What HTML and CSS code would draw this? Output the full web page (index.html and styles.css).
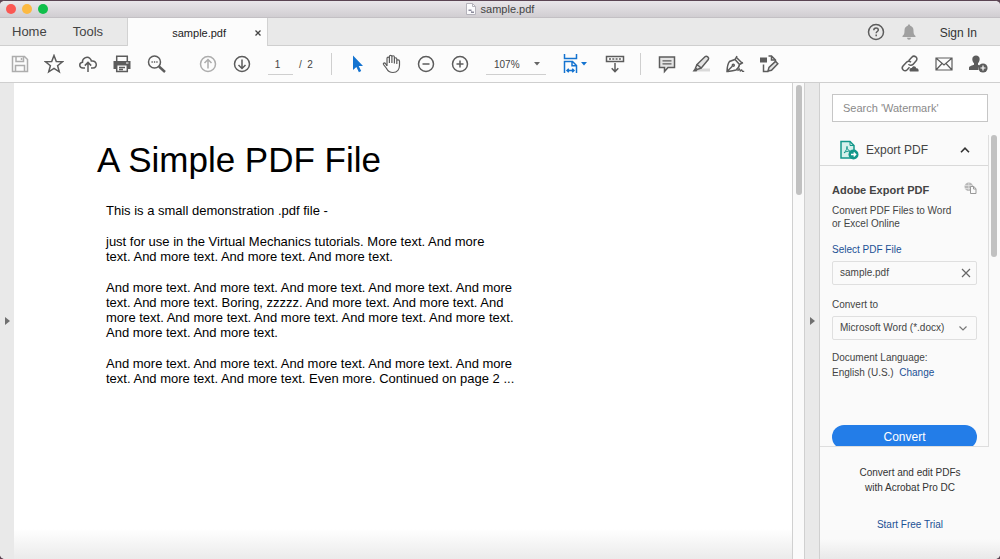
FILE: index.html
```html
<!DOCTYPE html>
<html lang="en">
<head>
<meta charset="utf-8">
<title>sample.pdf</title>
<link rel="stylesheet" href="styles.css">
</head>
<body>
<div class="window">
  <header class="titlebar">
    <div class="lights"><span class="light red"></span><span class="light amber"></span><span class="light green"></span></div>
    <div class="doc-title">
      <svg class="doc-icon" viewBox="0 0 10 12"><path d="M.5.5h6l3 3v8h-9z" fill="#fafafc" stroke="#b5b3bb"/><path d="M6.500.5v3h3" fill="none" stroke="#b5b3bb"/><path d="M2.500 6.500h3v2h2.500v1.500h-3v-2h-2.500z" fill="#8c8b9c"/></svg>
      <span>sample.pdf</span>
    </div>
  </header>

  <nav class="tabs">
    <button class="nav-link">Home</button>
    <button class="nav-link">Tools</button>
    <div class="tab">
      <span class="tab-name">sample.pdf</span>
      <button class="tab-close" aria-label="Close tab"><svg viewBox="0 0 8 8"><path d="M1.500 1.500l5 5M6.500 1.500l-5 5" stroke="#444" stroke-width="1.300"/></svg></button>
    </div>
    <div class="account">
      <button class="icon-btn" aria-label="Help"><svg class="icon" viewBox="0 0 20 20"><circle cx="10" cy="10" r="7.500"/><path d="M7.800 8.200c0-3 4.500-2.900 4.500-.3 0 1.600-2.100 1.600-2.100 3.300M10.200 12.600v1.600"/></svg></button>
      <button class="icon-btn" aria-label="Notifications"><svg class="icon" viewBox="0 0 20 20"><path class="bell" d="M10 2.500c.8 0 1.200.5 1.200 1.200 2.300.6 3.300 2.400 3.300 4.800 0 3.200.4 4.300 2 5.500v1h-13v-1c1.600-1.200 2-2.300 2-5.500 0-2.400 1-4.200 3.300-4.800 0-.7.4-1.200 1.200-1.200zM8 15.800h4c-.2 1.300-.9 1.900-2 1.900s-1.800-.6-2-1.900z"/></svg></button>
      <button class="sign-in">Sign In</button>
    </div>
  </nav>

  <div class="toolbar">
    <div class="group">
      <button class="icon-btn" aria-label="Save"><svg class="icon pale" viewBox="0 0 20 20"><path d="M2.500 2.500h12l3 3v12h-15zM6 2.500v5h7.500v-5M5.500 17.500v-6h9v6M11.500 4v2"/></svg></button>
      <button class="icon-btn" aria-label="Star"><svg class="icon" viewBox="0 0 20 20"><path d="M10 1.500l2.300 6 6.200.3-4.900 3.900 1.700 6.100L10 14.400l-5.300 3.400 1.700-6.100-4.900-3.900 6.200-.3z"/></svg></button>
      <button class="icon-btn" aria-label="Upload"><svg class="icon" viewBox="0 0 20 20"><path d="M7 14H5C.8 14 .7 8.600 4.500 8.200 4 4.500 9 1.600 12 4.500c.8.700 1.200 1.600 1.300 2.500 6-.8 6.600 7 1.700 7h-2M10 18V9M6.800 11.600L10 8.400l3.200 3.200"/></svg></button>
      <button class="icon-btn" aria-label="Print"><svg class="icon" viewBox="0 0 20 20"><path class="solid" d="M1.500 7h17v8h-3v-3.500h-11V15h-3z"/><path d="M4.700 7V2.200h10.600V7M4.700 11v6.500h10.600V11M7 13.500h6M7 15.500h4"/><path d="M14 9h2.500" stroke="#fff" stroke-width="1"/></svg></button>
      <button class="icon-btn" aria-label="Find"><svg class="icon" viewBox="0 0 20 20"><circle cx="8.500" cy="8" r="6"/><path d="M13 12.500l6 5.500" stroke-width="2.400"/><path d="M5.500 8h1.300M7.900 8h1.300M10.300 8h1.300"/></svg></button>
    </div>
    <div class="group pager">
      <button class="icon-btn" aria-label="Previous page"><svg class="icon pale" viewBox="0 0 20 20"><circle cx="10" cy="10" r="7.500"/><path d="M10 14.500v-9M6.500 9L10 5.500 13.500 9"/></svg></button>
      <button class="icon-btn" aria-label="Next page"><svg class="icon" viewBox="0 0 20 20"><circle cx="10" cy="10" r="7.500"/><path d="M10 5.500v9M6.500 11l3.500 3.500 3.500-3.500"/></svg></button>
    </div>
    <input class="page-no" type="text" value="1" aria-label="Page number">
    <span class="page-total">/&nbsp; 2</span>
    <span class="rule"></span>
    <div class="group">
      <button class="icon-btn" aria-label="Select"><svg class="icon" viewBox="0 0 20 20"><path d="M5 1.500v14.500l3.400-3 2.500 5.200 2.300-1.100-2.500-5h4.300z" fill="#1473d0" stroke="none"/></svg></button>
      <button class="icon-btn" aria-label="Hand"><svg class="icon thin" viewBox="0 0 20 20"><path d="M5 12V4.500c0-1.800 2.400-1.800 2.400 0V9M7.400 9V2.700c0-1.800 2.500-1.800 2.500 0V9M9.900 9V3c0-1.700 2.500-1.700 2.500 0v6.500M12.400 5c0-1.700 2.400-1.700 2.400 0v5M14.800 7c0-1.700 2.700-1.600 2.700.2v4c0 4-2.200 7.300-6.500 7.300-3.600 0-5.300-1.600-6.600-4.300L1.500 10.500c-.6-1.400 1-2 1.900-1L5 12"/></svg></button>
      <button class="icon-btn" aria-label="Zoom out"><svg class="icon" viewBox="0 0 20 20"><circle cx="10" cy="10" r="7.500"/><path d="M6.500 10h7"/></svg></button>
      <button class="icon-btn" aria-label="Zoom in"><svg class="icon" viewBox="0 0 20 20"><circle cx="10" cy="10" r="7.500"/><path d="M6.500 10h7M10 6.500v7"/></svg></button>
    </div>
    <div class="zoom-box">
      <select class="zoom-select" aria-label="Zoom level"><option>107%</option></select>
      <svg class="caret" viewBox="0 0 6 4"><path d="M0 0h6L3 3.500z" fill="#666"/></svg>
    </div>
    <button class="fit-btn" aria-label="Fit width">
      <svg class="icon blue" viewBox="0 0 20 20"><path d="M3.500 0v4.500h12V0M3.500 19V7.500h8l4 4V19M11 7.500v4.200h4.500M6 16.500h7M7.800 14.700L6 16.500l1.800 1.800M11.200 14.700l1.800 1.800-1.800 1.800"/></svg>
      <svg class="caret" viewBox="0 0 6 4"><path d="M0 0h6L3 3.500z" fill="#1473d0"/></svg>
    </button>
    <button class="icon-btn keys" aria-label="Page controls"><svg class="icon" viewBox="0 0 20 20"><path d="M1.500 2.500h17v5h-17zM10 9v8.500M6.700 14.300l3.300 3.300 3.300-3.300"/><path d="M4 5h13" stroke-dasharray="2 1.300"/></svg></button>
    <span class="rule"></span>
    <div class="group">
      <button class="icon-btn" aria-label="Comment"><svg class="icon" viewBox="0 0 20 20"><path d="M2.500 3h15v10.500H11l-3.500 4v-4h-5z" fill="#e4e4e4"/><path d="M5.500 6.800h9M5.500 9.800h9" stroke-width="1.200"/></svg></button>
      <button class="icon-btn" aria-label="Highlight"><svg class="icon" viewBox="0 0 20 20"><path d="M9 14.500h10v3H5z" fill="#d9d9d9" stroke="none"/><path d="M6 10.500l8-7.700c1.600-1.500 4.600.8 3.300 2.800l-7 8.400zM6 10.500l-1.500 3.500 1.800 1.500 4-1.500" fill="#e4e4e4"/><path class="solid" d="M4 14l2.500 2-1 1.500H1.500z"/></svg></button>
      <button class="icon-btn" aria-label="Sign"><svg class="icon" viewBox="0 0 20 20"><path d="M2 17.500C2.200 13 2.800 9.500 4.500 7.500L10 5.500l4.500 5c-.5 2.500-1.500 4.500-3.500 5.500-3 1-6 1.200-9 1.500zM2 17.500l5.300-5.300M10 5.500l2-3.500M14.500 10.500l3.500-2M11.500 3.500l5.500 5.500" /><circle cx="8.300" cy="11.200" r="1"/><path d="M12.500 16.800l2-1.800.8 2 1.400-1 .8 1.300h1.700" stroke-width="1.300"/></svg></button>
      <button class="icon-btn" aria-label="Edit"><svg class="icon" viewBox="0 0 20 20"><path d="M4.500 10.500v7h5M9.500 2h3l4 4v1.500M12.500 2v4h4"/><path class="solid" d="M1 3.500h7v5H1z"/><path d="M9 17l1-3.600 6.500-6 2.300 2.400-6.300 6.400z" fill="#e4e4e4"/></svg></button>
    </div>
    <div class="group share">
      <button class="icon-btn" aria-label="Share link"><svg class="icon" viewBox="0 0 20 20"><path d="M8.600 6.700l3.200-3.500c2.600-2.700 6.800.8 4.400 3.600L13 10.400c-1.500 1.500-3.500 1-4.500-.3M11 8.200c-1.500-1.500-3.300-1.200-4.500 0L3 12c-2.400 2.900 1.600 6.400 4.200 3.800l2.300-2.500"/><path class="solid" d="M10 17.500c-1.500-2.500.8-4 1.800-3.500 1-2.700 4.200-2 4.400.3 2.300-.2 2.800 2 2.300 3.200z"/></svg></button>
      <button class="icon-btn" aria-label="Email"><svg class="icon" viewBox="0 0 20 20"><path d="M2 4h16v12H2zM2.500 4.500L10 11l7.500-6.500M2.500 15.500L8 9.500M17.500 15.500L12 9.500" stroke-width="1.200"/></svg></button>
      <button class="icon-btn" aria-label="Add person"><svg class="icon" viewBox="0 0 20 20"><path class="solid" d="M8 1.500c4.500 0 4.500 5.500 2 7.800v1.500l2 1c-1.500 1-2 2.700-1.500 4.200H1v-2.500c.3-1.500 3.500-1.900 5-2.700V9.300C3.500 7 3.500 1.500 8 1.500z"/><circle cx="15" cy="14" r="4.600" fill="#5c5c5c" stroke="none"/><path d="M12.500 14h5M15 11.500v5" stroke="#fff" stroke-width="1.200"/></svg></button>
    </div>
  </div>

  <div class="workspace">
    <button class="gutter left" aria-label="Show navigation pane"><svg viewBox="0 0 5 8"><path d="M0 0l5 4-5 4z" fill="#707070"/></svg></button>
    <main class="page">
      <h1>A Simple PDF File</h1>
      <div class="copy">
        <p>This is a small demonstration .pdf file -</p>
        <p>just for use in the Virtual Mechanics tutorials. More text. And more<br>text. And more text. And more text. And more text.</p>
        <p>And more text. And more text. And more text. And more text. And more<br>text. And more text. Boring, zzzzz. And more text. And more text. And<br>more text. And more text. And more text. And more text. And more text.<br>And more text. And more text.</p>
        <p>And more text. And more text. And more text. And more text. And more<br>text. And more text. And more text. Even more. Continued on page 2 ...</p>
      </div>
    </main>
    <div class="scroll"><span class="thumb"></span></div>
    <button class="gutter right" aria-label="Hide tools pane"><svg viewBox="0 0 5 8"><path d="M0 0l5 4-5 4z" fill="#707070"/></svg></button>
    <aside class="side">
      <input class="search" type="text" placeholder="Search 'Watermark'" aria-label="Search tools">
      <div class="side-body">
        <section class="panel">
          <button class="panel-head">
            <svg class="export-icon" viewBox="0 0 20 20"><path d="M2 1.500h9l4 4V18H2z" fill="#d5f1ec" stroke="#12978a" stroke-width="1.500"/><path d="M11 1.500v4h4" fill="none" stroke="#12978a"/><path d="M5 13c2-2 3.500-5 3-7M7.800 7c.5 2.500 2 4 4.200 4.500M5 13c1.500-1.500 4-2 6.500-1.800" fill="none" stroke="#12978a"/><circle cx="14.500" cy="14.500" r="5" fill="#12978a"/><path d="M12 14.500h4.500M14.700 12.500l2 2-2 2" fill="none" stroke="#fff" stroke-width="1.300"/></svg>
            <span>Export PDF</span>
            <svg class="chevron" viewBox="0 0 10 6"><path d="M1 5.200l4-4 4 4" fill="none" stroke="#333" stroke-width="1.600"/></svg>
          </button>
          <div class="panel-body">
            <div class="panel-title"><h2>Adobe Export PDF</h2>
              <svg class="copy-icon" viewBox="0 0 13 12"><circle cx="4.800" cy="4.800" r="4.300" fill="#b8b8b8"/><path d="M1 3.500h7M1 6.500h6M4.800.5v8" stroke="#e8e8e8" stroke-width=".7"/><path d="M6.500 4.500h3.300l2.200 2.200v4.800H6.500z" fill="#fafafa" stroke="#999"/><path d="M9.500 4.500v2.500H12" fill="none" stroke="#999"/></svg></div>
            <p class="blurb">Convert PDF Files to Word<br>or Excel Online</p>
            <a class="select-file" href="#">Select PDF File</a>
            <div class="file-box"><span>sample.pdf</span><button aria-label="Remove file"><svg viewBox="0 0 10 10"><path d="M1 1l8 8M9 1L1 9" stroke="#666" stroke-width="1.200"/></svg></button></div>
            <label class="to-label" for="format">Convert to</label>
            <div class="format-box">
              <select id="format"><option>Microsoft Word (*.docx)</option></select>
              <svg class="down" viewBox="0 0 8 5"><path d="M.5.5L4 4 7.500.5" fill="none" stroke="#777" stroke-width="1.200"/></svg>
            </div>
            <p class="lang">Document Language:<br>English (U.S.)&nbsp; <a href="#">Change</a></p>
            <button class="convert">Convert</button>
          </div>
        </section>
        <div class="side-scroll"><span class="thumb"></span></div>
      </div>
      <footer class="promo">
        <p>Convert and edit PDFs<br>with Acrobat Pro DC</p>
        <a href="#">Start Free Trial</a>
      </footer>
    </aside>
  </div>
</div>
</body>
</html>
```
FILE: styles.css
```css
* { box-sizing: border-box; }
html, body { height: 100%; margin: 0; }
body { background: #5b4453; font-family: "Liberation Sans", Arial, sans-serif; color: #444; }
button, input, select { font: inherit; color: inherit; background: none; border: 0; padding: 0; margin: 0; border-radius: 0; }
button, select { appearance: none; cursor: pointer; }
h1, h2, p { margin: 0; font-weight: normal; }
a { color: #1a5195; text-decoration: none; }
svg { display: block; flex: none; }

.window { height: 100%; display: flex; flex-direction: column; border-top: 1px solid #5b4453; border-radius: 5px; overflow: hidden; background: #fafafa; }

.titlebar { flex: none; height: 17px; display: grid; grid-template-columns: 1fr auto 1fr; align-items: center; background: linear-gradient(#e9e6ea, #d1ced2); border-bottom: 1px solid #c3c0c4; }
.lights { display: flex; gap: 6px; padding-left: 6px; }
.light { width: 10px; height: 10px; border-radius: 50%; }
.red { background: #fb5753; }
.amber { background: #fcb942; }
.green { background: #10bf4b; }
.doc-title { display: flex; align-items: center; gap: 5px; font-size: 11px; line-height: 16px; }
.doc-icon { width: 10px; height: 12px; }

.tabs { flex: none; height: 28px; display: flex; background: #e9e9e9; }
.nav-link { font-size: 13px; padding: 0 12px; border-bottom: 1px solid #cfcfcf; }
.nav-link + .nav-link { padding: 0 24px 0 14px; }
.tab { width: 141px; display: flex; align-items: center; justify-content: flex-end; gap: 28px; padding: 2px 5px 0 0; background: #fcfcfc; border: solid #d2d2d2; border-width: 0 1px; font-size: 11px; color: #222; }
.tab-close svg { width: 8px; height: 8px; }
.account { flex: 1; display: flex; justify-content: flex-end; align-items: center; padding-right: 23px; border-bottom: 1px solid #cfcfcf; }
.account .icon-btn { width: 33px; }
.sign-in { font-size: 12px; margin-left: 14px; padding-top: 3px; color: #333; }

.icon-btn { width: 34px; height: 28px; display: grid; place-items: center; flex: none; }
.icon { width: 20px; height: 20px; fill: none; stroke: #5c5c5c; stroke-width: 1.5; }
.icon.thin { stroke-width: 1.2; }
.icon.pale { stroke: #adadad; }
.icon.blue { stroke: #1473d0; }
.icon .solid { fill: #5c5c5c; stroke: none; }
.icon .bell { fill: #a0a0a0; stroke: none; }

.toolbar { flex: none; height: 37px; display: flex; align-items: center; padding: 0 5px 0 3px; background: #fcfcfc; border-bottom: 1px solid #cfcfcf; font-size: 11px; }
.group { display: flex; }
.pager { margin: 0 9px 0 18px; }
.page-no { width: 25px; height: 22px; text-align: center; border-bottom: 1px solid #cfcfcf; padding: 2px 6px 0 0; font-size: 10px; }
.page-total { width: 14px; margin: 0 18px 0 6px; padding-top: 1px; white-space: nowrap; font-size: 10px; }
.rule { width: 1px; height: 22px; background: #cfcfcf; margin-right: 9px; }
.zoom-box { width: 60px; height: 22px; margin: 0 15px 0 9px; display: flex; align-items: center; border-bottom: 1px solid #cfcfcf; position: relative; }
.zoom-select { width: 100%; height: 100%; padding: 2px 0 0 8px; font-size: 10px; }
.caret { width: 6px; height: 4px; }
.zoom-box .caret { position: absolute; right: 6px; pointer-events: none; }
.fit-btn { display: flex; align-items: center; }
.keys { margin: 0 8px 0 11px; }
.share { margin-left: auto; }

.workspace { flex: 1; min-height: 0; display: flex; }
.gutter { flex: none; width: 14px; background: #e9e9e9; display: flex; align-items: center; justify-content: center; }
.gutter svg { width: 5px; height: 8px; }
.gutter.right { width: 16px; border: solid #d0d0d0; border-width: 0 1px; }
.page { flex: 1; min-width: 0; overflow: hidden; background: linear-gradient(to top, #ebebeb, #fff 30px); color: #000; padding: 57px 24px 24px 83px; }
.page h1 { font-size: 35px; line-height: 40px; }
.copy { display: grid; gap: 16px; padding: 23px 0 0 9px; font-size: 13px; line-height: 15px; white-space: nowrap; }
.scroll { flex: none; width: 12px; border-left: 1px solid #d0d0d0; padding: 2px 2px 0 3px; background: #fafafa; }
.thumb { display: block; width: 6px; border-radius: 3px; background: #c1c1c1; }
.scroll .thumb { height: 110px; }

.side { flex: none; width: 180px; display: flex; flex-direction: column; background: linear-gradient(to top, #e9e9e9, #fafafa 20px); font-size: 11px; }
.search { flex: none; height: 28px; margin: 11px 12px 13px; padding: 0 10px; border: 1px solid #c6c6c6; background: #fff; font-size: 11px; }
.search::placeholder { color: #8a8a8a; opacity: 1; }
.side-body { flex: none; height: 312px; display: flex; }
.panel { flex: 1; min-width: 0; overflow: hidden; border: solid #dedede; border-width: 0 1px 1px 0; }
.panel-head { width: 100%; height: 31px; display: flex; align-items: center; gap: 7px; padding: 0 18px 0 19px; border-bottom: 1px solid #d9d9d9; font-size: 12px; }
.export-icon { width: 20px; height: 20px; }
.chevron { width: 10px; height: 6px; margin-left: auto; }
.panel-body { padding: 16px 11px 0 12px; display: flex; flex-direction: column; line-height: 14px; }
.panel-title { display: flex; justify-content: space-between; }
.panel-title h2 { font-size: 11px; line-height: 16px; font-weight: bold; }
.copy-icon { width: 13px; height: 12px; }
.blurb { margin-top: 6px; font-size: 10px; line-height: 13px; white-space: nowrap; }
.select-file { margin-top: 13px; font-size: 10px; }
.file-box, .format-box { height: 24px; border: 1px solid #dfdfdf; display: flex; align-items: center; font-size: 10px; position: relative; border-radius: 2px; }
.file-box { margin-top: 4px; padding: 0 5px 0 7px; justify-content: space-between; }
.file-box svg { width: 10px; height: 10px; }
.to-label { margin-top: 13px; font-size: 10px; }
.format-box { margin-top: 4px; }
.format-box select { width: 100%; height: 100%; padding-left: 7px; }
.down { width: 8px; height: 5px; position: absolute; right: 9px; pointer-events: none; }
.lang { margin-top: 10px; font-size: 10px; line-height: 15px; }
.convert { flex: none; height: 24px; margin-top: 45px; border-radius: 12px; background: #237de8; color: #fff; font-size: 12px; }
.side-scroll { flex: none; width: 11px; padding-left: 2px; }
.side-scroll .thumb { height: 122px; }
.promo { display: flex; flex-direction: column; align-items: center; gap: 22px; padding-top: 18px; font-size: 10px; line-height: 15px; text-align: center; color: #333; }
```
